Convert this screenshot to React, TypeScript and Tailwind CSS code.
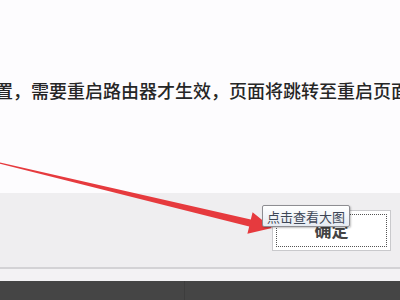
import React from 'react';

const font = { fontFamily: '"Noto Sans CJK SC", "Noto Sans", sans-serif' };

const App: React.FC = () => {
  return (
    <div className="relative w-[400px] h-[300px] overflow-hidden bg-[#fdfcfe] flex flex-col" style={font}>
      {/* message */}
      <div className="h-[193px] pt-[78px] pl-0">
        <p className="ml-[-5px] whitespace-nowrap text-[18px] leading-[24px] text-[#262626] font-medium">
          置，需要重启路由器才生效，页面将跳转至重启页面
        </p>
      </div>

      {/* button bar */}
      <div className="h-[76px] bg-[#efeef0] border-b-2 border-[#d3d2d5] flex justify-end items-start pt-[17px] pr-[9px]">
        <button className="w-[119px] h-[41px] bg-white border border-[#c9c9cc] p-[3px]">
          <span className="flex h-full w-full items-center justify-center border border-dotted border-[#555] text-[17px] font-semibold text-[#444] pb-[1px]">
            确定
          </span>
        </button>
      </div>

      <div className="h-[12px] bg-[#f3f2f4]" />
      <div className="flex-1 bg-[#454545] flex">
        <div className="w-[185px] border-r border-[#3d3d3d]" />
      </div>

      {/* arrow */}
      <svg className="absolute left-0 top-0" width="400" height="300" viewBox="0 0 400 300">
        <polygon
          points="0,162.5 250.8,219.6 252.6,212.3 272,228 247.4,233.7 249.2,226.4 0,163.8"
          fill="#e63a3e"
        />
      </svg>

      {/* tooltip */}
      <div className="absolute left-[262px] top-[205px] h-[22px] px-[4px] flex items-center rounded-[2px] border border-[#8d8d92] bg-gradient-to-b from-white to-[#e6ebf2] shadow-[1px_1px_2px_rgba(0,0,0,0.25)] text-[13px] leading-none text-[#3d4656] whitespace-nowrap">
        点击查看大图
      </div>
    </div>
  );
};

export default App;
